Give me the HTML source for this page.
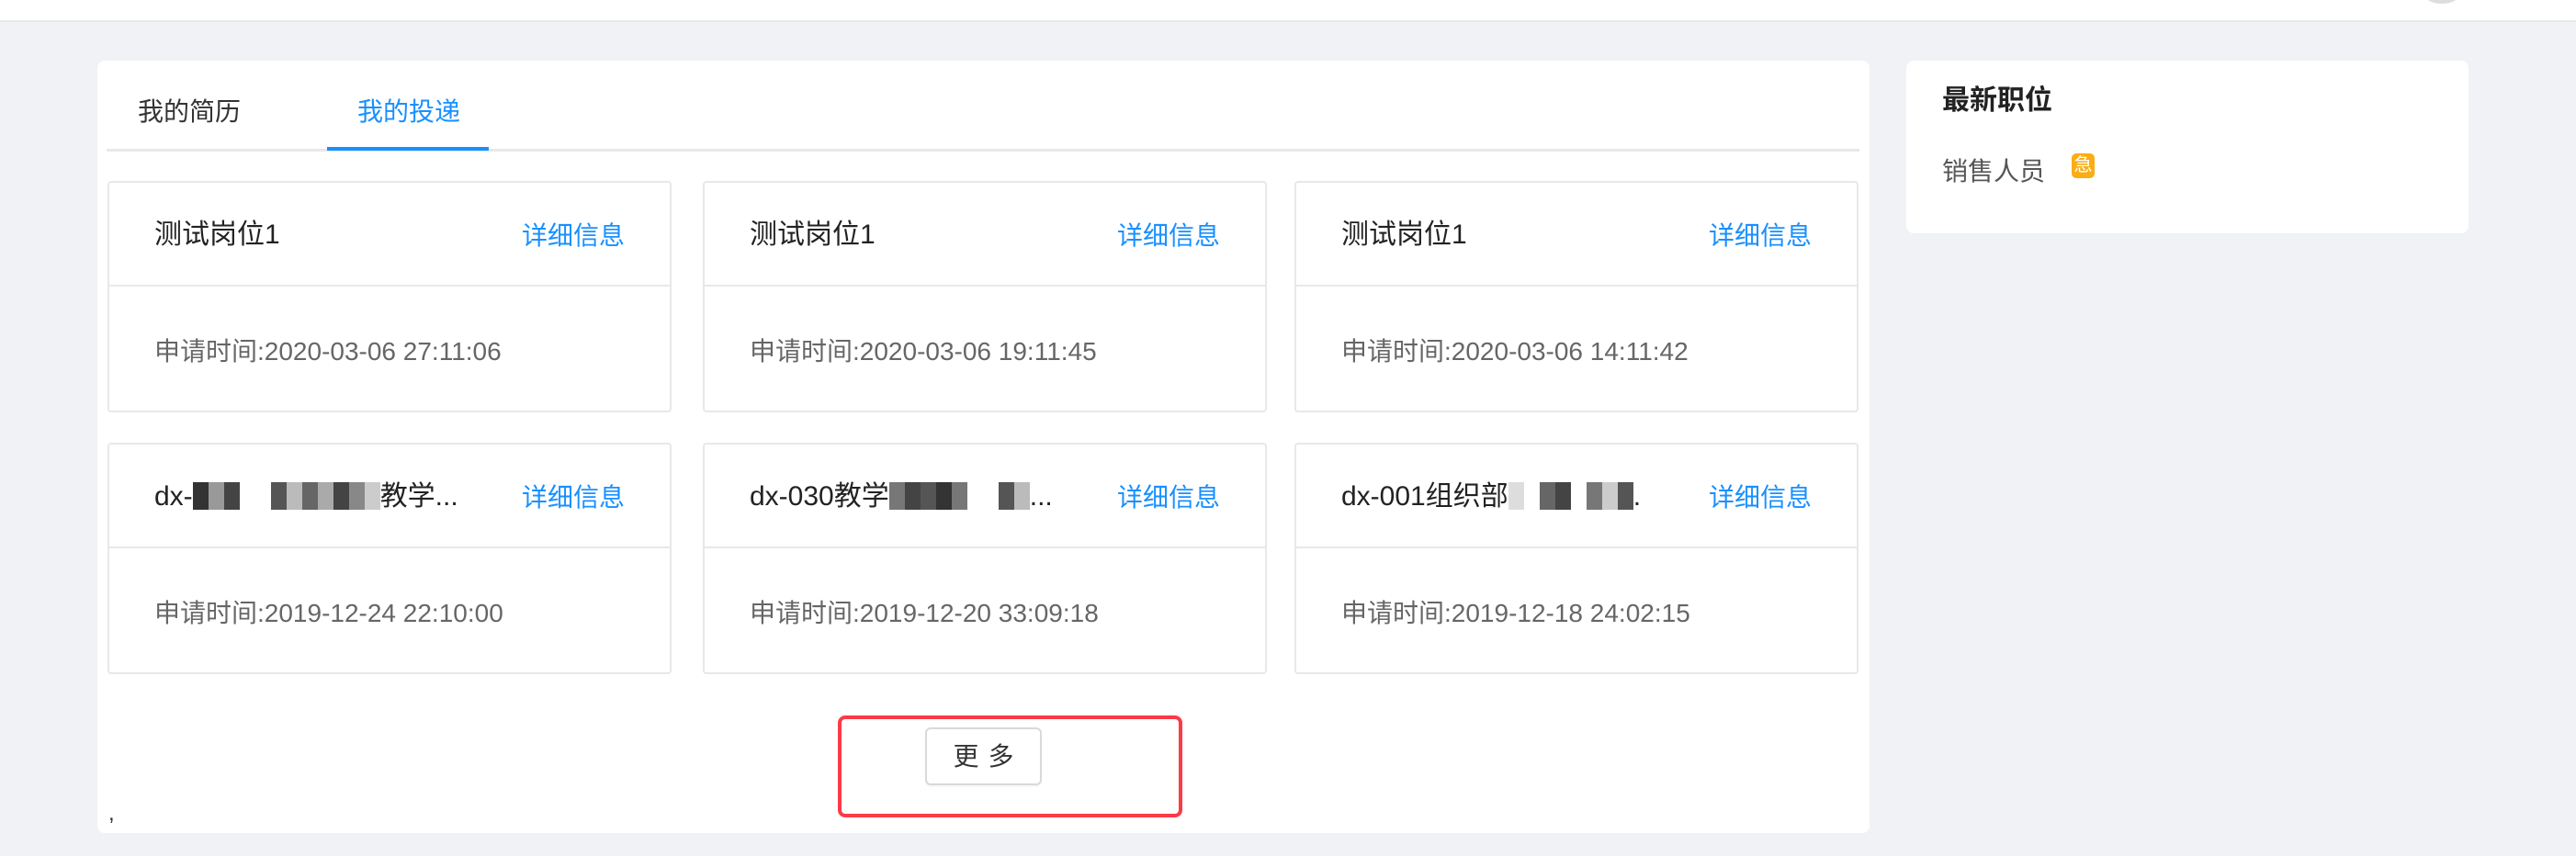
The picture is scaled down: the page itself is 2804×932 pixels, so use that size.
<!DOCTYPE html>
<html><head><meta charset="utf-8"><style>
*{margin:0;padding:0;box-sizing:border-box}
body{width:2804px;height:932px;background:#f0f2f5;position:relative;overflow:hidden;font-family:"Liberation Sans","Noto Sans CJK SC",sans-serif}
.abs{position:absolute}
.hdr{left:0;top:0;width:2804px;height:24px;background:#fff;border-bottom:2px solid #e8e8e8}
.main{left:106px;top:66px;width:1929px;height:841px;background:#fff;border-radius:8px}
.side{left:2075px;top:66px;width:612px;height:188px;background:#fff;border-radius:8px}
.tab{font-size:28px;line-height:28px;top:108px;color:#333}
.card{width:614px;height:252px;border:2px solid #e8e8e8;border-radius:4px;background:#fff}
.card .h{position:absolute;left:0;right:0;top:0;height:113px;border-bottom:2px solid #e8e8e8}
.card .t{position:absolute;left:49px;top:40px;font-size:30px;line-height:34px;color:#222;white-space:nowrap}
.card .l{position:absolute;right:49px;top:42px;font-size:28px;line-height:32px;color:#1890ff;background:#fff;padding-left:4px}
.card .d{position:absolute;left:49px;top:168px;font-size:28px;line-height:32px;color:#666}
.b{display:inline-block;width:17px;height:30px;vertical-align:-5px}
</style></head><body>
<div class="abs hdr"></div>
<div class="abs" style="left:2640px;top:-14px;width:36px;height:18px;border-radius:50%;background:#ddd"></div>
<div class="abs main"></div>
<div class="abs tab" style="left:150px">我的简历</div>
<div class="abs tab" style="left:389px;color:#1890ff">我的投递</div>
<div class="abs" style="left:116px;top:162px;width:1908px;height:3px;background:#e8e8e8"></div>
<div class="abs" style="left:356px;top:160px;width:176px;height:4px;background:#1890ff"></div>

<div class="abs card" style="left:117px;top:197px"><div class="h"><div class="t">测试岗位1</div><div class="l">详细信息</div></div><div class="d">申请时间:2020-03-06 27:11:06</div></div>
<div class="abs card" style="left:765px;top:197px"><div class="h"><div class="t">测试岗位1</div><div class="l">详细信息</div></div><div class="d">申请时间:2020-03-06 19:11:45</div></div>
<div class="abs card" style="left:1409px;top:197px"><div class="h"><div class="t">测试岗位1</div><div class="l">详细信息</div></div><div class="d">申请时间:2020-03-06 14:11:42</div></div>

<div class="abs card" style="left:117px;top:482px"><div class="h"><div class="t">dx-<span class="b" style="background:#333"></span><span class="b" style="background:#999"></span><span class="b" style="background:#444"></span><span class="b" style="background:#fff"></span><span class="b" style="background:#fff"></span><span class="b" style="background:#555"></span><span class="b" style="background:#bbb"></span><span class="b" style="background:#666"></span><span class="b" style="background:#aaa"></span><span class="b" style="background:#444"></span><span class="b" style="background:#888"></span><span class="b" style="background:#ccc"></span>教学...</div><div class="l">详细信息</div></div><div class="d">申请时间:2019-12-24 22:10:00</div></div>
<div class="abs card" style="left:765px;top:482px"><div class="h"><div class="t">dx-030教学<span class="b" style="background:#777"></span><span class="b" style="background:#444"></span><span class="b" style="background:#555"></span><span class="b" style="background:#333"></span><span class="b" style="background:#777"></span><span class="b" style="background:#fff"></span><span class="b" style="background:#fff"></span><span class="b" style="background:#555"></span><span class="b" style="background:#bbb"></span>...</div><div class="l">详细信息</div></div><div class="d">申请时间:2019-12-20 33:09:18</div></div>
<div class="abs card" style="left:1409px;top:482px"><div class="h"><div class="t">dx-001组织部<span class="b" style="background:#ddd"></span><span class="b" style="background:#fff"></span><span class="b" style="background:#666"></span><span class="b" style="background:#444"></span><span class="b" style="background:#fff"></span><span class="b" style="background:#777"></span><span class="b" style="background:#ccc"></span><span class="b" style="background:#555"></span>.</div><div class="l">详细信息</div></div><div class="d">申请时间:2019-12-18 24:02:15</div></div>

<div class="abs" style="left:912px;top:779px;width:375px;height:111px;border:4px solid #fc3a48;border-radius:8px"></div>
<div class="abs" style="left:1007px;top:792px;width:127px;height:63px;border:2px solid #d9d9d9;border-radius:6px;background:#fff;box-shadow:0 2px 0 rgba(0,0,0,.03);font-size:28px;line-height:59px;text-align:center;color:#333;letter-spacing:10px;padding-left:10px">更多</div>
<div class="abs" style="left:118px;top:872px;font-size:24px;color:#333">,</div>

<div class="abs side"></div>
<div class="abs" style="left:2114px;top:93px;font-size:30px;line-height:34px;font-weight:bold;color:#222">最新职位</div>
<div class="abs" style="left:2114px;top:171px;font-size:28px;line-height:32px;color:#555">销售人员</div>
<div class="abs" style="left:2255px;top:167px;width:25px;height:27px;background:#faad14;border-radius:5px;color:#fff;font-size:20px;line-height:27px;text-align:center">急</div>
</body></html>
